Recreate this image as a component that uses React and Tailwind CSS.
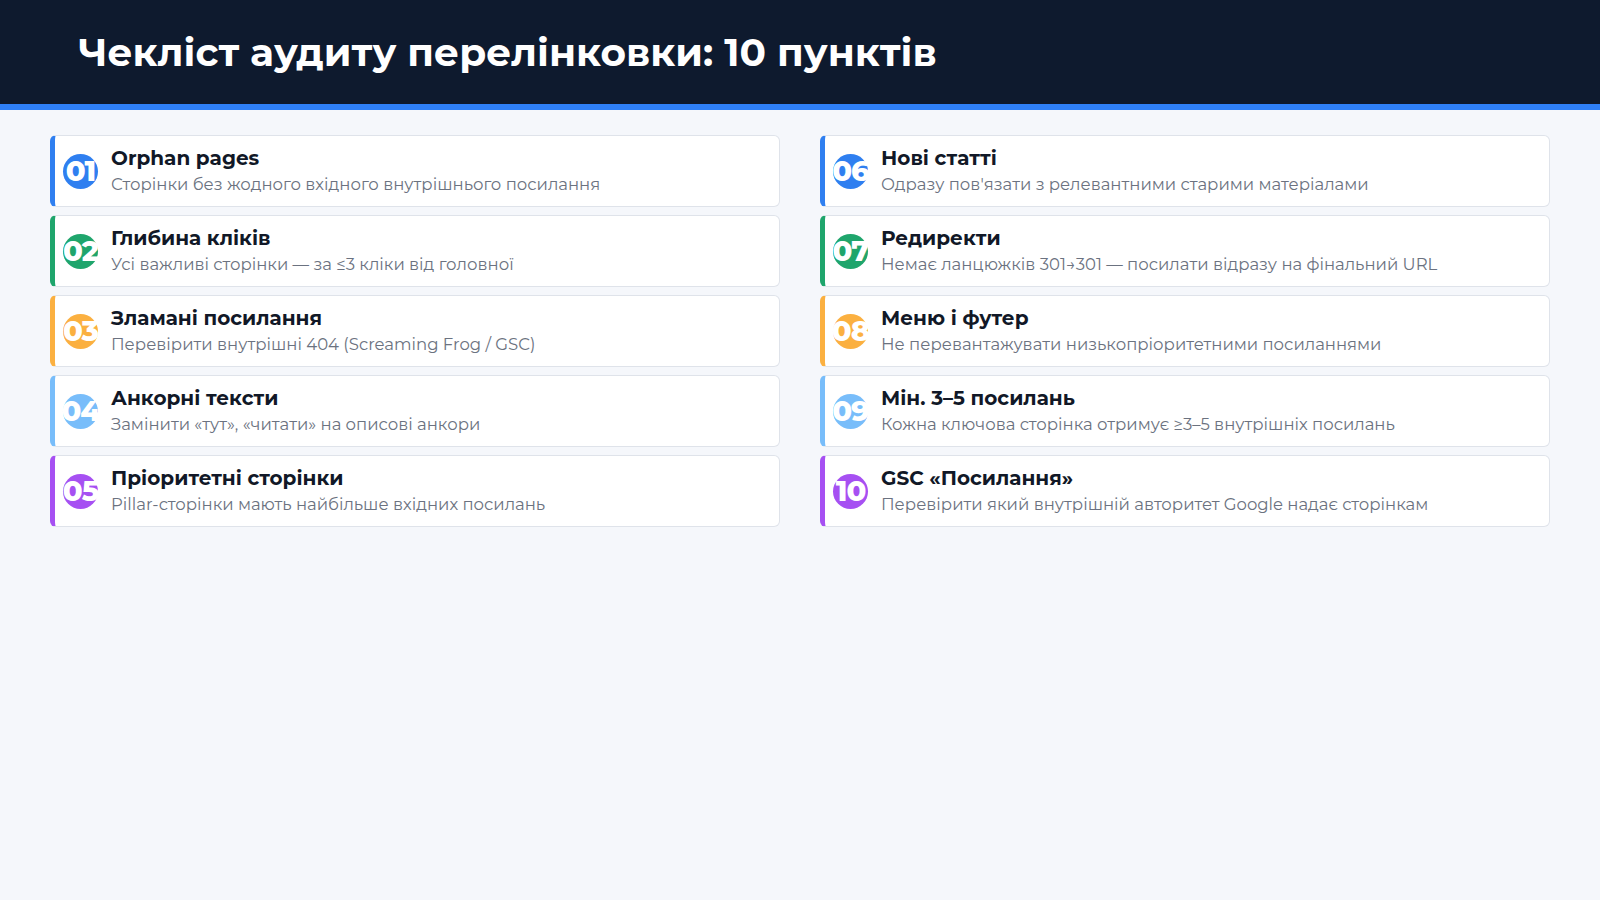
const items=[
["01","Orphan pages","Сторінки без жодного вхідного внутрішнього посилання","#2f7ff0"],
["02","Глибина кліків","Усі важливі сторінки — за ≤3 кліки від головної","#1fa56c"],
["03","Зламані посилання","Перевірити внутрішні 404 (Screaming Frog / GSC)","#fbb040"],
["04","Анкорні тексти","Замінити «тут», «читати» на описові анкори","#78bdfa"],
["05","Пріоритетні сторінки","Pillar-сторінки мають найбільше вхідних посилань","#a650f2"],
["06","Нові статті","Одразу пов'язати з релевантними старими матеріалами","#2f7ff0"],
["07","Редиректи","Немає ланцюжків 301→301 — посилати відразу на фінальний URL","#1fa56c"],
["08","Меню і футер","Не перевантажувати низькопріоритетними посиланнями","#fbb040"],
["09","Мін. 3–5 посилань","Кожна ключова сторінка отримує ≥3–5 внутрішніх посилань","#78bdfa"],
["10","GSC «Посилання»","Перевірити який внутрішній авторитет Google надає сторінкам","#a650f2"],
];
function Card({n,t,d,c}){return(
<div className="flex items-center h-[72px] bg-white rounded-md border border-[#dfe3ea] border-l-[5px] pl-[8px]" style={{borderLeftColor:c}}>
<div className="w-[35px] h-[35px] rounded-full flex items-center justify-center text-white font-extrabold text-[29px] tracking-[-1px] shrink-0" style={{background:c}}>{n}</div>
<div className="ml-[13px] flex flex-col">
<div className="text-[20px] font-bold text-[#111827] leading-[26px]">{t}</div>
<div className="text-[16.5px] text-[#6b7280] leading-[26px]">{d}</div>
</div></div>)}
export default function App(){return(
<div className="w-[1600px] h-[900px] bg-[#f5f7fb]" style={{fontFamily:"Montserrat, 'Noto Sans', sans-serif"}}>
<div className="h-[104px] bg-[#0e1a2e] flex items-center pl-[79px]"><h1 className="text-white font-bold text-[39px]">Чекліст аудиту перелінковки: 10 пунктів</h1></div>
<div className="h-[6px] bg-[#2f80f7]"/>
<div className="grid grid-cols-2 gap-x-[40px] px-[50px] pt-[25px]">
<div className="flex flex-col gap-[8px]">{items.slice(0,5).map(i=><Card key={i[0]} n={i[0]} t={i[1]} d={i[2]} c={i[3]}/>)}</div>
<div className="flex flex-col gap-[8px]">{items.slice(5).map(i=><Card key={i[0]} n={i[0]} t={i[1]} d={i[2]} c={i[3]}/>)}</div>
</div></div>)}
